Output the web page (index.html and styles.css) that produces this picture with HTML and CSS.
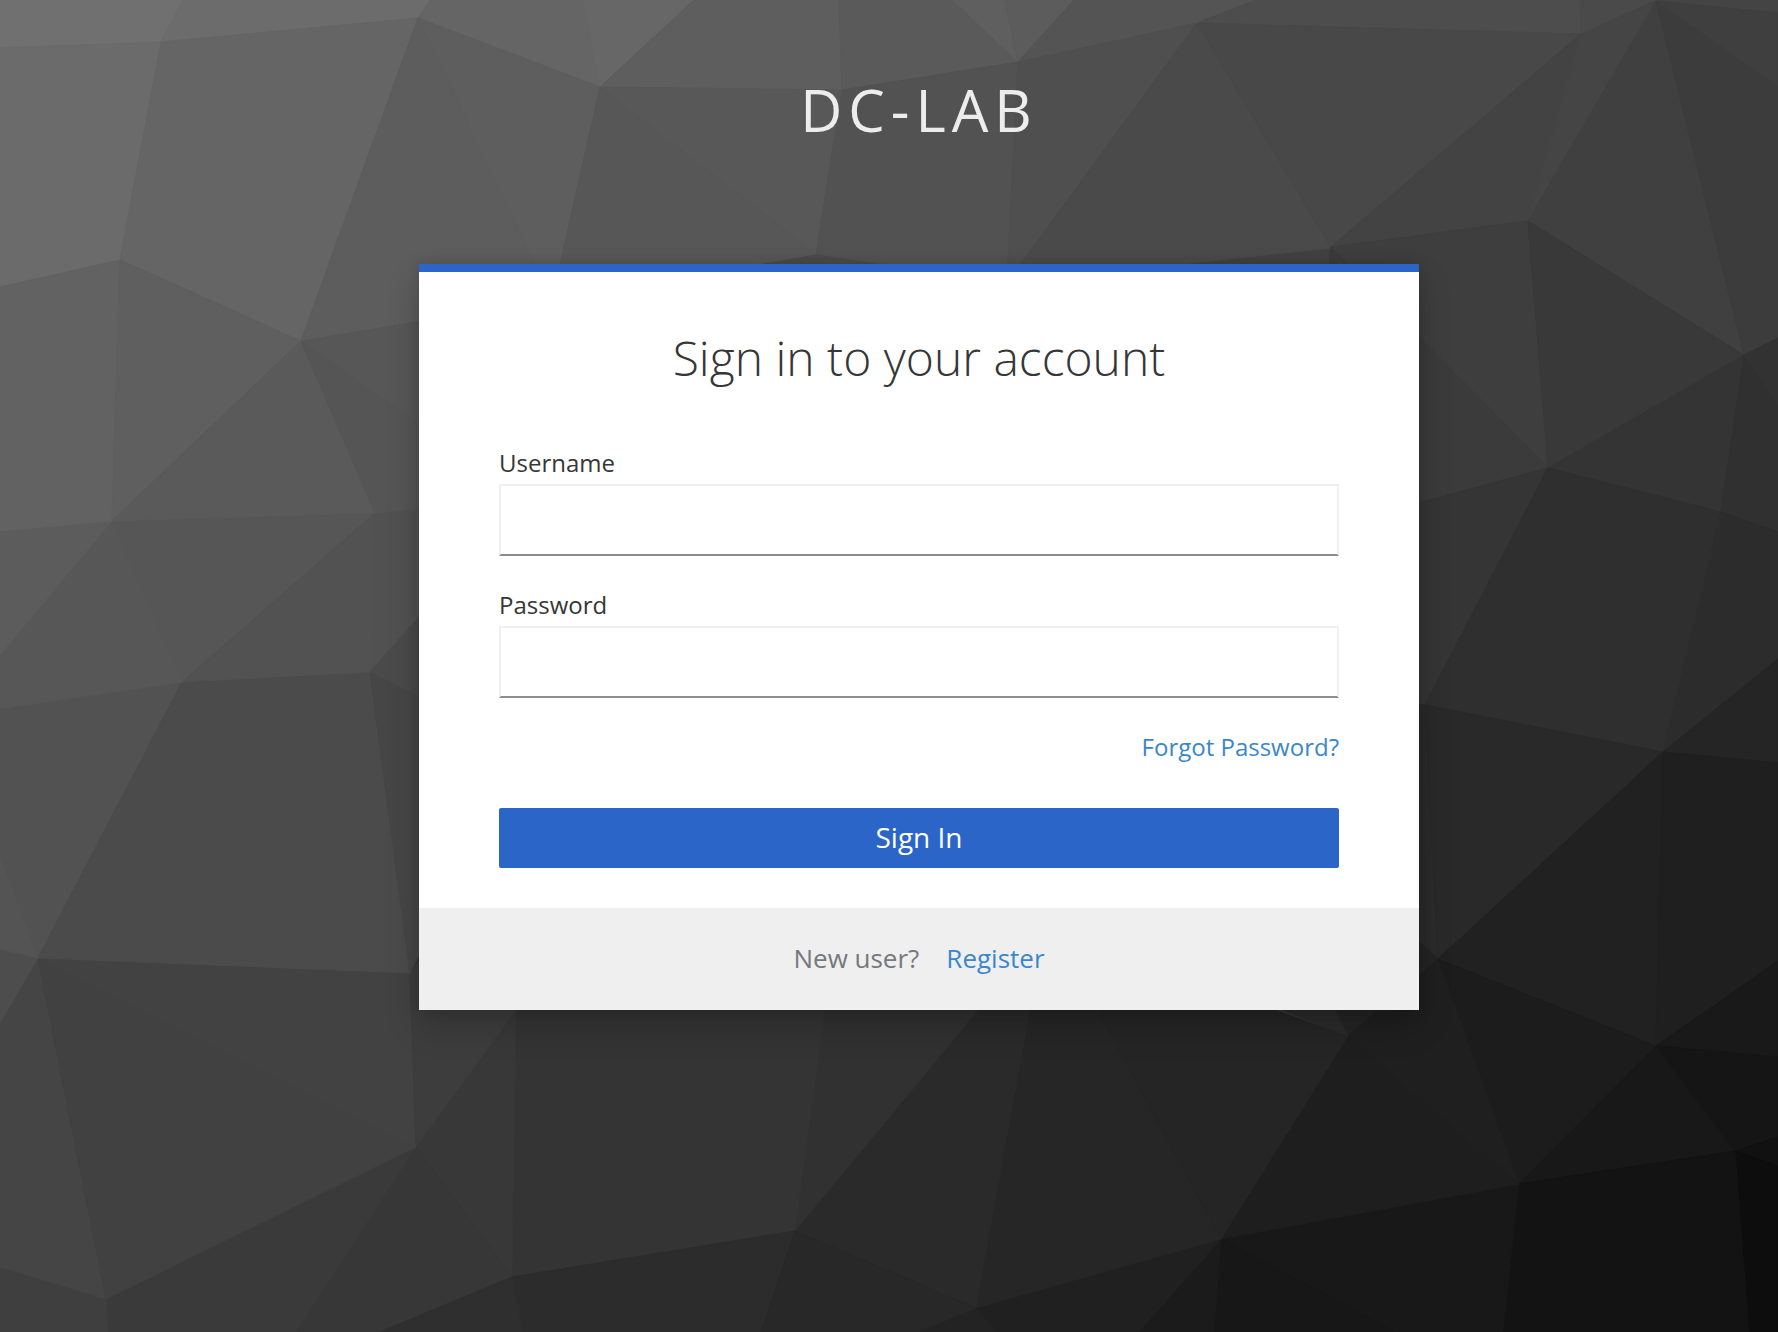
FILE: index.html
```
<!DOCTYPE html>
<html lang="en">
<head>
<meta charset="utf-8">
<meta name="viewport" content="width=device-width, initial-scale=1">
<title>Sign in to DC-LAB</title>
<link rel="stylesheet" href="styles.css">
</head>
<body class="page">
<svg class="backdrop" viewBox="0 0 1778 1332" preserveAspectRatio="xMidYMid slice" aria-hidden="true">
  <!-- centre -->
  <polygon color="#4a4a4a" points="552,300 816,254 1007,283 816,500"/>
  <polygon color="#414141" points="1007,283 1331,248 1331,500 1007,500"/>
  <!-- upper band -->
  <polygon color="#707070" points="0,0 183,0 161,42 0,48"/>
  <polygon color="#6c6c6c" points="183,0 430,0 418,18 161,42"/>
  <polygon color="#656565" points="430,0 583,0 600,87 418,18"/>
  <polygon color="#676767" points="583,0 694,0 600,87"/>
  <polygon color="#5e5e5e" points="694,0 839,0 842,90 600,87"/>
  <polygon color="#5a5a5a" points="839,0 953,0 1018,62 842,90"/>
  <polygon color="#5f5f5f" points="953,0 1005,0 1018,62"/>
  <polygon color="#5c5c5c" points="1005,0 1074,0 1018,62"/>
  <polygon color="#545454" points="1074,0 1256,0 1197,23 1018,62"/>
  <polygon color="#4d4d4d" points="1256,0 1580,0 1581,34 1197,23"/>
  <polygon color="#4a4a4a" points="1580,0 1656,0 1581,34"/>
  <polygon color="#444444" points="1656,0 1778,0 1778,13 1656,1"/>
  <polygon color="#6b6b6b" points="0,48 161,42 120,260 0,287"/>
  <polygon color="#656565" points="161,42 418,18 301,341 120,260"/>
  <polygon color="#5d5d5d" points="418,18 552,300 301,341"/>
  <polygon color="#5e5e5e" points="418,18 600,87 552,300"/>
  <polygon color="#575757" points="600,87 816,254 552,300"/>
  <polygon color="#585858" points="600,87 842,90 816,254"/>
  <polygon color="#525252" points="842,90 1018,62 1007,283 816,254"/>
  <polygon color="#4f4f4f" points="1018,62 1197,23 1007,283"/>
  <polygon color="#4a4a4a" points="1197,23 1331,248 1007,283"/>
  <polygon color="#484848" points="1197,23 1581,34 1331,247"/>
  <polygon color="#434343" points="1581,34 1528,221 1331,247"/>
  <polygon color="#454545" points="1581,34 1656,1 1528,221"/>
  <polygon color="#404040" points="1656,1 1744,355 1528,221"/>
  <polygon color="#3c3c3c" points="1656,1 1778,86 1778,338 1744,355"/>
  <polygon color="#3f3f3f" points="1656,1 1778,13 1778,86"/>
  <!-- right side -->
  <polygon color="#3e3e3e" points="1331,247 1528,221 1548,468"/>
  <polygon color="#393939" points="1528,221 1744,355 1548,468"/>
  <polygon color="#3b3b3b" points="1331,247 1548,468 1419,502 1300,535"/>
  <polygon color="#343434" points="1744,355 1721,512 1548,468"/>
  <polygon color="#303030" points="1744,355 1778,405 1778,532 1721,512"/>
  <polygon color="#323232" points="1744,355 1778,338 1778,405"/>
  <polygon color="#353535" points="1548,468 1425,705 1300,690 1300,535"/>
  <polygon color="#2f2f2f" points="1548,468 1721,512 1663,752 1425,705"/>
  <polygon color="#2c2c2c" points="1721,512 1778,532 1778,659 1663,752"/>
  <polygon color="#252525" points="1663,752 1778,659 1778,763"/>
  <polygon color="#2b2b2b" points="1425,705 1438,959 1300,830 1300,690"/>
  <polygon color="#292929" points="1425,705 1663,752 1438,959"/>
  <polygon color="#212121" points="1663,752 1656,1046 1438,959"/>
  <polygon color="#1f1f1f" points="1663,752 1778,763 1778,961 1656,1046"/>
  <polygon color="#191919" points="1656,1046 1778,961 1778,1057"/>
  <polygon color="#1c1c1c" points="1438,959 1656,1046 1519,1184"/>
  <polygon color="#242424" points="1438,959 1348,1036 1300,980 1300,830"/>
  <polygon color="#1f1f1f" points="1348,1036 1438,959 1519,1184"/>
  <polygon color="#181818" points="1656,1046 1735,1151 1519,1184"/>
  <polygon color="#151515" points="1656,1046 1778,1057 1778,1137 1735,1151"/>
  <polygon color="#111111" points="1735,1151 1778,1137 1778,1166"/>
  <polygon color="#0d0d0d" points="1735,1151 1778,1166 1778,1332 1749,1332"/>
  <!-- lower band -->
  <polygon color="#131313" points="1519,1184 1735,1151 1749,1332 1503,1332"/>
  <polygon color="#181818" points="1221,1239 1519,1184 1503,1332 1395,1332"/>
  <polygon color="#171717" points="1221,1239 1395,1332 1214,1332"/>
  <polygon color="#1e1e1e" points="1348,1036 1519,1184 1221,1239"/>
  <polygon color="#1b1b1b" points="1221,1239 1214,1332 1139,1332"/>
  <polygon color="#202020" points="976,1308 1221,1239 1139,1332 996,1332"/>
  <polygon color="#232323" points="976,1308 996,1332 918,1332"/>
  <polygon color="#262626" points="1050,900 1098,1010 1221,1239 976,1308"/>
  <polygon color="#252525" points="1050,900 1274,1010 1348,1036 1221,1239 1098,1010"/>
  <polygon color="#2b2b2b" points="1180,968 1320,980 1348,1036"/>
  <polygon color="#2a2a2a" points="795,1231 978,1010 1050,900 976,1308"/>
  <polygon color="#313131" points="795,1231 837,920 1045,920 978,1010"/>
  <polygon color="#343434" points="512,1277 518,920 837,920 795,1231"/>
  <polygon color="#383838" points="416,1147 516,1010 512,1277"/>
  <polygon color="#373737" points="416,1147 512,1277 380,1332 296,1332"/>
  <polygon color="#3a3a3a" points="106,1299 416,1147 296,1332 108,1332"/>
  <polygon color="#3f3f3f" points="0,1267 106,1299 108,1332 0,1332"/>
  <polygon color="#454545" points="0,1023 38,958 106,1299 0,1267"/>
  <polygon color="#414141" points="38,958 416,1147 106,1299"/>
  <polygon color="#424242" points="38,958 410,973 416,1147"/>
  <polygon color="#3d3d3d" points="410,973 419,961 516,1010 416,1147"/>
  <polygon color="#2c2c2c" points="512,1277 795,1231 761,1332 522,1332"/>
  <polygon color="#2f2f2f" points="512,1277 522,1332 380,1332"/>
  <polygon color="#282828" points="795,1231 976,1308 918,1332 761,1332"/>
  <!-- left side -->
  <polygon color="#4d4d4d" points="0,949 38,958 0,1023"/>
  <polygon color="#525252" points="0,709 182,682 38,958 0,855"/>
  <polygon color="#545454" points="0,855 38,958 0,949"/>
  <polygon color="#4b4b4b" points="182,682 370,672 410,973 38,958"/>
  <polygon color="#464646" points="370,672 419,695 500,800 410,973"/>
  <polygon color="#515151" points="375,513 440,507 440,594 370,672"/>
  <polygon color="#4a4a4a" points="370,672 440,594 440,706"/>
  <polygon color="#565656" points="112,521 375,513 182,682"/>
  <polygon color="#525252" points="375,513 370,672 182,682"/>
  <polygon color="#575757" points="0,655 112,521 182,682 0,709"/>
  <polygon color="#5c5c5c" points="0,531 112,521 0,655"/>
  <polygon color="#626262" points="0,287 120,260 112,521 0,531"/>
  <polygon color="#5f5f5f" points="120,260 301,341 112,521"/>
  <polygon color="#5a5a5a" points="301,341 375,513 112,521"/>
  <polygon color="#555555" points="301,341 440,438 440,507 375,513"/>
  <polygon color="#575757" points="301,341 552,300 440,438"/>
</svg>

<div class="login">
  <header class="login-header">DC-LAB</header>
  <main class="card">
    <h1 class="card-title">Sign in to your account</h1>
    <form class="form">
      <div class="field">
        <label class="label" for="username">Username</label>
        <input class="input" id="username" name="username" type="text" autocomplete="off">
      </div>
      <div class="field">
        <label class="label" for="password">Password</label>
        <input class="input" id="password" name="password" type="password" autocomplete="off">
      </div>
      <div class="options"><a class="link" href="#forgot">Forgot Password?</a></div>
      <button class="submit" type="submit">Sign In</button>
    </form>
    <footer class="card-footer">
      <span>New user?</span>
      <a class="link" href="#register">Register</a>
    </footer>
  </main>
</div>
</body>
</html>
```
FILE: styles.css
```
* {
  box-sizing: border-box;
}

.page {
  position: relative;
  margin: 0;
  min-height: 100vh;
  background: #333333;
  color: #363636;
  font-family: "Open Sans", "Noto Sans", sans-serif;
  font-size: 24px;
  line-height: 38px;
}

.backdrop {
  position: absolute;
  inset: 0;
  width: 100%;
  height: 100%;
}

.backdrop polygon {
  fill: currentColor;
  stroke: currentColor;
  stroke-width: 1;
}

.login {
  position: relative;
  display: flex;
  flex-direction: column;
  align-items: center;
  padding: 0 0 80px 60px;
}

.login-header {
  padding: 70px 0 114px;
  color: #ededed;
  font-size: 58px;
  line-height: 80px;
  letter-spacing: 6px;
}

.card {
  width: 100%;
  max-width: 1000px;
  border-top: 8px solid #2b65c7;
  background: #ffffff;
  box-shadow: 0 16px 32px rgba(3, 3, 3, 0.2), 0 0 12px rgba(3, 3, 3, 0.12);
}

.card-title {
  margin: 0;
  padding: 54px 80px;
  font-size: 48px;
  font-weight: 300;
  line-height: 64px;
  text-align: center;
}

.form {
  display: flex;
  flex-direction: column;
  padding: 0 80px 40px;
}

.field {
  display: flex;
  flex-direction: column;
  gap: 2px;
  margin-bottom: 30px;
}

.input {
  width: 100%;
  height: 72px;
  padding: 0 16px;
  border: 2px solid #f0f0f0;
  border-bottom-color: #8b8d8f;
  border-radius: 0;
  background: #ffffff;
  color: inherit;
  font: inherit;
  outline: 0;
}

.options {
  margin-bottom: 42px;
  text-align: right;
}

.link {
  color: #3a87cb;
  text-decoration: none;
}

.submit {
  height: 60px;
  padding: 0 0 2px;
  border: 0;
  border-radius: 2px;
  background: #2b65c7;
  color: #ffffff;
  font: inherit;
  font-size: 28px;
  cursor: pointer;
}

.card-footer {
  display: flex;
  justify-content: center;
  gap: 27px;
  padding: 31px 80px 33px;
  background: #efefef;
  color: #75787c;
  font-size: 26px;
}
```
